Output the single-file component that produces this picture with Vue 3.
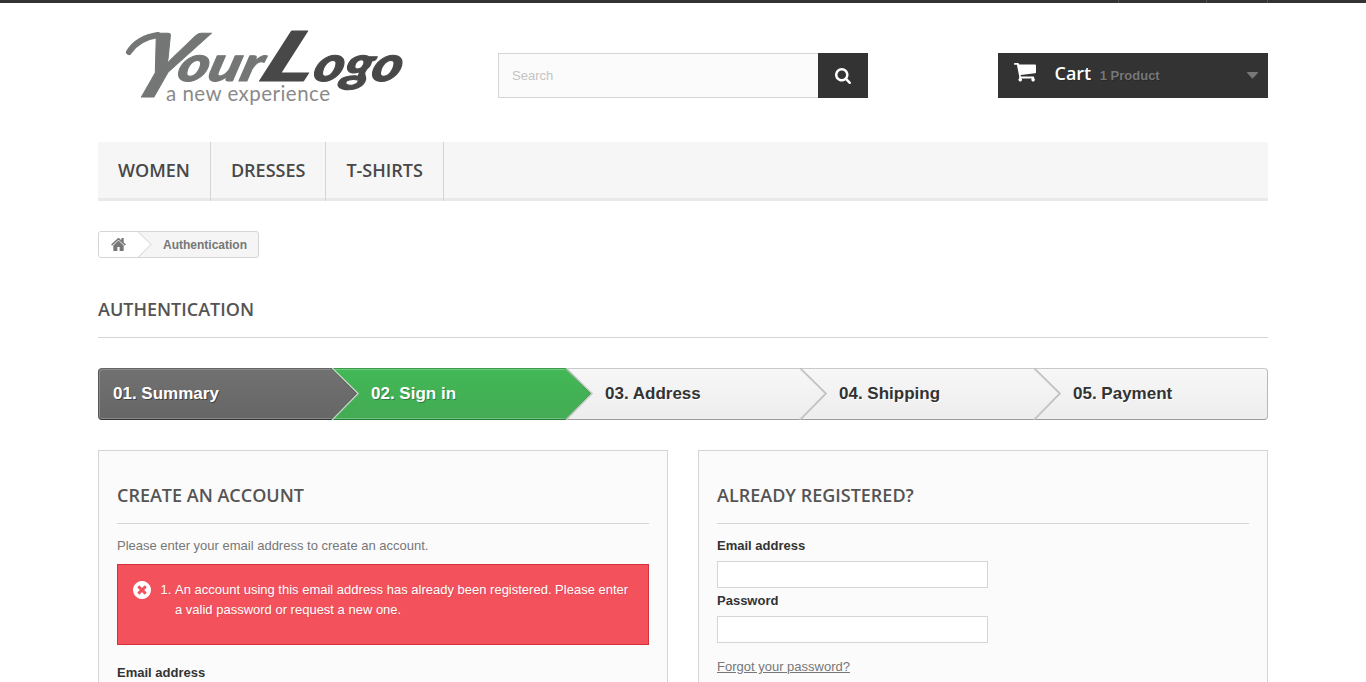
<script setup>
const links = ['Women', 'Dresses', 'T-shirts']
const steps = [
  { label: '01. Summary', kind: 'done' },
  { label: '02. Sign in', kind: 'current' },
  { label: '03. Address', kind: 'todo' },
  { label: '04. Shipping', kind: 'todo' },
  { label: '05. Payment', kind: 'todo' }
]
</script>

<template>
  <div class="page">
    <div class="topbar"><div class="topbar-inner"><i class="cell contact"></i><i class="cell user"></i><i class="cell out"></i></div></div>
    <div class="container">
      <header class="header">
        <svg class="logo" width="310" height="90" viewBox="98 20 310 90" role="img" aria-label="Your Logo a new experience">
          <path class="swash" d="M129 52Q138 38 158 35" />
          <g class="word your">
            <text transform="translate(124 97) skewX(-24)" font-size="88" textLength="54" lengthAdjust="spacingAndGlyphs">Y</text>
            <text transform="translate(175 81) skewX(-16)" font-size="49" textLength="84" lengthAdjust="spacingAndGlyphs">our</text>
          </g>
          <g class="word mark">
            <text transform="translate(256 81) skewX(-24)" font-size="69" textLength="53" lengthAdjust="spacingAndGlyphs">L</text>
            <text transform="translate(311 81) skewX(-16)" font-size="49" textLength="88" lengthAdjust="spacingAndGlyphs">ogo</text>
          </g>
          <text class="tagline" x="166" y="101" font-size="20.5" textLength="164">a new experience</text>
        </svg>
        <form class="search" @submit.prevent>
          <input type="text" placeholder="Search" />
          <button type="button" aria-label="Search">
            <svg width="16" height="16" viewBox="64 128 1664 1664"><path fill="#fff" d="M1216 832q0-185-131.5-316.5t-316.5-131.5-316.5 131.5-131.5 316.5 131.5 316.5 316.5 131.5 316.5-131.5 131.5-316.5zm512 832q0 52-38 90t-90 38q-54 0-90-38l-343-342q-179 124-399 124-143 0-273.5-55.5t-225-150-150-225-55.5-273.5 55.5-273.5 150-225 225-150 273.5-55.5 273.5 55.5 225 150 150 225 55.5 273.5q0 220-124 399l343 343q37 37 37 90z" /></svg>
          </button>
        </form>
        <a class="cart">
          <svg class="cart-icon" width="22" height="19" viewBox="0 0 22 19"><path fill="#fff" d="M.8 0H4q1 0 1.300 1.500H21q1 0 1 1V9.300q0 .9-.9 1L6.600 12l.3 1.500H19.500q.7 0 .7.700v1.300a1.700 1.700 0 1 1-2.200 0H7.400a1.700 1.700 0 1 1-2.300 0L5.200 13.500 2.900 1.800H.8Q0 1.800 0 .9T.8 0z" /></svg>
          <b>Cart</b><span>1 Product</span>
          <svg class="caret" width="11" height="7" viewBox="0 0 11 7"><path fill="#777" d="M.5 0h10q.8.2.3 1L6 6.200q-.5.5-1 0L.2 1Q-.3.200.5 0z" /></svg>
        </a>
      </header>
      <nav class="menu"><a v-for="l in links" :key="l">{{ l }}</a></nav>
      <div class="breadcrumb">
        <a class="home">
          <svg width="15" height="13" viewBox="64 253 1664 1283" preserveAspectRatio="none"><path fill="#777" d="M1472 992v480q0 26-19 45t-45 19h-384v-384h-256v384h-384q-26 0-45-19t-19-45v-480q0-1 .5-3t.5-3l575-474 575 474q1 2 1 6zm223-69l-62 74q-8 9-21 11h-3q-13 0-21-7l-692-577-692 577q-12 8-24 7-13-2-21-11l-62-74q-8-10-7-23.500t11-21.500l719-599q32-26 76-26t76 26l244 204v-195q0-14 9-23t23-9h192q14 0 23 9t9 23v408l219 182q10 8 11 21.500t-7 23.500z" /></svg>
        </a>
        <svg class="crumb-tip" width="14" height="25" viewBox="0 0 14 25"><path fill="#fff" d="M0 0L13 12.500L0 25z" /><path fill="none" stroke="#d0d0d0" d="M.5 0L13 12.500L.5 25" /></svg>
        <span>Authentication</span>
      </div>
      <h1>Authentication</h1>
      <ul class="steps">
        <li v-for="(s, i) in steps" :key="s.label" :class="s.kind">
          <span>{{ s.label }}</span>
          <svg v-if="i < 4" class="tip" width="30" height="52" viewBox="0 0 30 52">
            <defs>
              <linearGradient :id="'fill' + i" x1="0" y1="0" x2="0" y2="1"><stop class="from" offset="0" /><stop class="to" offset="1" /></linearGradient>
            </defs>
            <path class="halo" d="M1 0L27 25.500L1 52" />
            <path :fill="`url(#fill${i})`" d="M0 1L25.500 25.500L0 51z" />
            <path class="edge" d="M0 .5L25.500 25.500L0 51.500" />
          </svg>
        </li>
      </ul>
      <div class="columns">
        <section class="box">
          <h3>Create an account</h3>
          <p>Please enter your email address to create an account.</p>
          <div class="alert">
            <svg width="18" height="18" viewBox="128 128 1536 1536"><path fill="#fff" d="M1277 1122q0-26-19-45l-181-181 181-181q19-19 19-45 0-27-19-46l-90-90q-19-19-46-19-26 0-45 19l-181 181-181-181q-19-19-45-19-27 0-46 19l-90 90q-19 19-19 46 0 26 19 45l181 181-181 181q-19 19-19 45 0 27 19 46l90 90q19 19 46 19 26 0 45-19l181-181 181 181q19 19 45 19 27 0 46-19l90-90q19-19 19-46zm387-226q0 209-103 385.500t-279.500 279.500-385.500 103-385.500-103-279.500-279.500-103-385.500 103-385.500 279.500-279.500 385.500-103 385.500 103 279.500 279.500 103 385.500z" /></svg>
            <ol><li>An account using this email address has already been registered. Please enter a valid password or request a new one.</li></ol>
          </div>
          <label>Email address</label>
        </section>
        <section class="box">
          <h3>Already registered?</h3>
          <label>Email address</label>
          <input type="text" aria-label="Email address" />
          <label>Password</label>
          <input type="password" aria-label="Password" />
          <a class="forgot">Forgot your password?</a>
        </section>
      </div>
    </div>
  </div>
</template>

<style>
body { margin: 0; background: #fff; }
</style>

<style scoped>
* { box-sizing: border-box; }
.page { height: 682px; overflow: hidden; font: 13px/18px "Liberation Sans", Arial, sans-serif; color: #777; }
.container, .topbar-inner { width: 1170px; margin: 0 auto; }
.topbar { height: 3px; background: #333; }
.topbar-inner { display: flex; justify-content: flex-end; height: 3px; }
.cell { border-right: 1px solid #515151; height: 3px; }
.contact { width: 1px; }
.user { width: 88px; }
.out { width: 61px; }

.header { display: flex; height: 139px; }
.logo { flex: none; margin-top: 17px; overflow: visible; }
.word { font-family: Lato, sans-serif; font-weight: 900; font-style: italic; stroke-width: 1; stroke-linejoin: round; }
.your { fill: #747675; stroke: #747675; }
.mark { fill: #484848; stroke: #484848; }
.swash { fill: none; stroke: #747675; stroke-width: 6; stroke-linecap: round; }
.tagline { font-family: Lato, sans-serif; font-weight: 400; fill: #8a8a8a; }
.search { display: flex; width: 370px; height: 45px; margin: 50px 0 0 90px; }
.search input { width: 320px; height: 45px; padding: 0 13px; border: 1px solid #d6d4d4; border-right: 0; background: #fbfbfb; font: 13px "Liberation Sans", Arial, sans-serif; outline: 0; border-radius: 0; }
.search input::placeholder { color: #c4c4c4; opacity: 1; }
.search button { display: flex; align-items: center; justify-content: center; width: 50px; padding: 0; border: 0; background: #333; }
.cart { display: flex; align-items: center; width: 270px; height: 45px; margin: 50px 0 0 130px; padding: 0 10px 0 16px; background: #333; color: #777; font-weight: bold; text-shadow: 1px 1px rgba(0, 0, 0, .2); }
.cart-icon { margin: -7px 18.500px 0 0; }
.cart b { margin: -5px 8.500px 0 0; color: #fff; font: 600 18px/22px "Open Sans", sans-serif; }
.caret { margin-left: auto; }

.menu { display: flex; height: 59px; background: #f6f6f6; box-shadow: inset 0 -3px #e9e9e9; }
.menu a { padding: 17px 20px 0; border-right: 1px solid #d6d4d4; color: #484848; font: 600 18px/22px "Open Sans", sans-serif; text-transform: uppercase; }

.breadcrumb { display: flex; width: 161px; height: 27px; margin-top: 30px; overflow: hidden; border: 1px solid #d6d4d4; border-radius: 3px; background: #f5f5f5; font-size: 12px; line-height: 26px; font-weight: bold; }
.home { display: flex; align-items: center; width: 39px; padding-left: 12px; background: #fff; }
.crumb-tip { flex: none; margin-right: 11px; }

h1, h3 { margin: 0; border-bottom: 1px solid #d6d4d4; color: #555454; font: 600 18px/22px "Open Sans", sans-serif; text-transform: uppercase; }
h1 { height: 80px; padding-top: 40px; }

.steps { display: grid; grid-template-columns: repeat(5, 234px); height: 52px; margin: 30px 0; padding: 0; list-style: none; }
.steps li { position: relative; display: flex; align-items: center; height: 52px; padding-left: 39px; border-style: solid; border-width: 1px 0; font-size: 17px; font-weight: bold; box-shadow: inset 0 1px rgba(255, 255, 255, .25), inset 0 -1px rgba(255, 255, 255, .25); }
.steps span { margin-top: -1px; }
.steps li:first-child { padding-left: 14px; border-left-width: 1px; border-radius: 4px 0 0 4px; box-shadow: inset 1px 1px #8b8b8b, inset 0 -1px #8b8b8b; }
.steps li:last-child { border-right-width: 1px; border-radius: 0 4px 4px 0; }
.done { border-color: #666 #444 #333 #555; background: linear-gradient(#727171, #666); color: #fff; text-shadow: 1px 1px rgba(0, 0, 0, .4); }
.current { border-color: #399b49 #399b49 #247f32; background: linear-gradient(#42b856, #43ab54); color: #fff; text-shadow: 1px 1px rgba(0, 0, 0, .3); }
.todo { border-color: #c9c9c9 #b7b7b7 #9b9b9b; background: linear-gradient(#f7f7f7, #ededed); color: #333; text-shadow: 1px 1px #fff; }
.tip { position: absolute; z-index: 1; left: 233px; top: -1px; }
.steps li:first-child .tip { left: 232px; }
.edge, .halo { fill: none; stroke-width: 1; }
.halo { stroke-width: 1.500; }
.done .from { stop-color: #727171; } .done .to { stop-color: #666; }
.done .edge { stroke: #5e5e5e; } .done .halo { stroke: #c8cdc8; }
.current .from { stop-color: #42b856; } .current .to { stop-color: #43ab54; }
.current .edge { stroke: #399b49; } .current .halo { stroke: #c4c8c4; }
.todo .from { stop-color: #f7f7f7; } .todo .to { stop-color: #ededed; }
.todo .edge { stroke: #dcdcdc; } .todo .halo { stroke: #bcbcbc; }

.columns { display: grid; grid-template-columns: 570px 570px; gap: 30px; }
.box { height: 360px; padding: 33px 18px 0; border: 1px solid #d6d4d4; background: #fbfbfb; }
.box h3 { height: 40px; margin-bottom: 13px; }
.box p { margin: 0 0 9px; }
.box label { display: block; color: #333; font-weight: bold; }
.box input { display: block; width: 271px; height: 27px; margin: 6px 0 4px; border: 1px solid #d6d4d4; background: #fff; border-radius: 0; }
.alert { display: flex; height: 81px; margin-bottom: 19px; padding: 15px; border: 1px solid #d4323d; background: #f3515c; color: #fff; line-height: 20px; text-shadow: 1px 1px rgba(0, 0, 0, .1); }
.alert svg { flex: none; margin-top: 1px; }
.alert ol { margin: 0; padding-left: 24px; }
.forgot { display: inline-block; margin-top: 11px; text-decoration: underline; }
</style>
